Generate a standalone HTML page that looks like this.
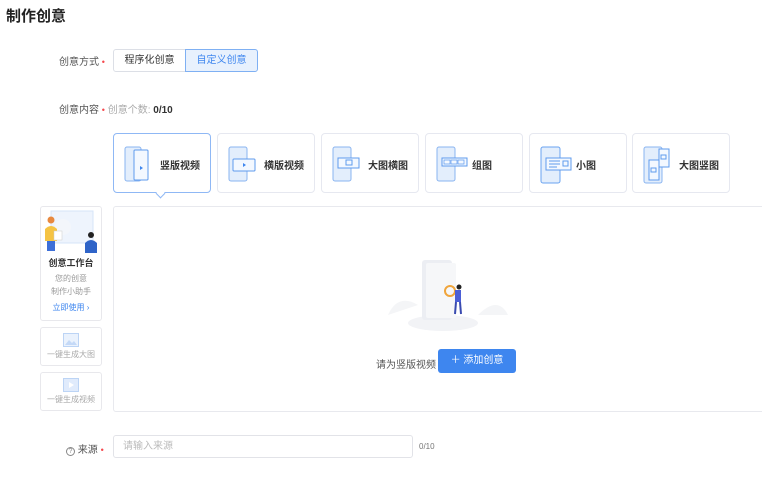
<!DOCTYPE html>
<html><head><meta charset="utf-8"><style>
*{margin:0;padding:0;box-sizing:border-box}
body{width:772px;height:484px;background:#fff;font-family:"Liberation Sans","Noto Sans CJK SC",sans-serif;color:#333;position:relative;overflow:hidden;font-size:10px}
.a{position:absolute}
.lbl{font-size:10px;color:#555}
.star{color:#f5484d;font-size:9px}
.card{position:absolute;top:133px;width:98px;height:60px;border:1px solid #e6e8f0;border-radius:4px;background:#fff}
.card.on{border-color:#8fb8f5}
.card .t{position:absolute;left:46px;top:23px;font-size:10px;font-weight:bold;color:#333}
.card svg{position:absolute;left:10px;top:12px}
.side{position:absolute;left:40px;width:62px;border:1px solid #e8e8ec;border-radius:3px;background:#fff;text-align:center}
</style></head><body>
<div class="a" style="left:6px;top:5px;font-size:15px;font-weight:bold;color:#222">制作创意</div>

<div class="a lbl" style="left:59px;top:53px">创意方式 <span class="star">•</span></div>
<div class="a" style="left:113px;top:49px;width:73px;height:23px;border:1px solid #dcdfe6;border-radius:3px 0 0 3px;font-size:10px;line-height:21px;text-align:center;color:#333">程序化创意</div>
<div class="a" style="left:185px;top:49px;width:73px;height:23px;border:1px solid #7fb0f3;background:#e8f1fd;border-radius:0 3px 3px 0;font-size:10px;line-height:21px;text-align:center;color:#3e86ef">自定义创意</div>

<div class="a lbl" style="left:59px;top:101px">创意内容 <span class="star">•</span> <span style="color:#aaa">创意个数:</span> <b style="color:#333">0/10</b></div>

<div class="card on" style="left:113px"><svg width="28" height="36"><rect x="1" y="1" width="16" height="34" rx="2" fill="#e3eefc" stroke="#8ab4f0"/><rect x="10" y="4" width="14" height="30" rx="1" fill="#f3f8ff" stroke="#5f9bee"/><path d="M16 20l3 2-3 2z" fill="#3e86ef"/></svg><span class="t">竖版视频</span></div>
<div class="a" style="left:157px;top:190px;width:7px;height:7px;background:#fff;border-right:1px solid #8fb8f5;border-bottom:1px solid #8fb8f5;transform:rotate(45deg)"></div>
<div class="card" style="left:217px"><svg width="30" height="36"><rect x="1" y="1" width="18" height="34" rx="2" fill="#e3eefc" stroke="#8ab4f0"/><rect x="5" y="13" width="22" height="12" rx="1" fill="#f3f8ff" stroke="#5f9bee"/><path d="M15 17l3 2-3 2z" fill="#3e86ef"/></svg><span class="t">横版视频</span></div>
<div class="card" style="left:321px"><svg width="30" height="36"><rect x="1" y="1" width="18" height="34" rx="2" fill="#e3eefc" stroke="#8ab4f0"/><rect x="6" y="12" width="21" height="10" fill="#f3f8ff" stroke="#5f9bee"/><rect x="14" y="14" width="6" height="5" fill="none" stroke="#5f9bee"/></svg><span class="t">大图横图</span></div>
<div class="card" style="left:425px"><svg width="34" height="36"><rect x="1" y="1" width="18" height="34" rx="2" fill="#e3eefc" stroke="#8ab4f0"/><rect x="6" y="12" width="25" height="8" fill="#f3f8ff" stroke="#5f9bee"/><path d="M8 14h6v4H8zM15 14h6v4h-6zM22 14h6v4h-6z" fill="none" stroke="#5f9bee" stroke-width=".7"/></svg><span class="t">组图</span></div>
<div class="card" style="left:529px"><svg width="34" height="38"><rect x="1" y="1" width="19" height="36" rx="2" fill="#e3eefc" stroke="#6aa3f0"/><rect x="6" y="12" width="25" height="12" fill="#f3f8ff" stroke="#5f9bee"/><path d="M9 15h11M9 18h11M9 21h8" stroke="#5f9bee"/><rect x="23" y="15" width="5" height="5" fill="none" stroke="#5f9bee"/></svg><span class="t">小图</span></div>
<div class="card" style="left:632px"><svg width="30" height="38"><rect x="1" y="1" width="18" height="36" rx="2" fill="#e3eefc" stroke="#8ab4f0"/><rect x="16" y="3" width="10" height="18" fill="#f3f8ff" stroke="#5f9bee"/><rect x="6" y="14" width="10" height="20" fill="#f3f8ff" stroke="#5f9bee"/><rect x="18" y="9" width="5" height="4" fill="none" stroke="#5f9bee"/><rect x="8" y="22" width="5" height="4" fill="none" stroke="#5f9bee"/></svg><span class="t">大图竖图</span></div>

<div class="side" style="top:206px;height:115px">
<svg width="60" height="46" style="display:block;margin:0 auto"><rect x="10" y="4" width="42" height="32" fill="#eef4fd" stroke="#d6e4f8"/><circle cx="22" cy="20" r="8" fill="#f3f6fb"/><circle cx="10" cy="13" r="3.5" fill="#e8893f"/><path d="M4 22q6-6 12 0v12H4z" fill="#f5c343"/><rect x="6" y="34" width="8" height="10" fill="#3d6fd8"/><rect x="13" y="24" width="8" height="9" fill="#fff" stroke="#ccc" stroke-width=".5"/><circle cx="50" cy="28" r="3" fill="#222"/><path d="M44 36q6-6 12 0v10H44z" fill="#2f64c8"/></svg>
<div style="font-size:9px;font-weight:bold;color:#333;margin-top:3px">创意工作台</div>
<div style="font-size:8px;color:#999;line-height:13px;margin-top:3px">您的创意<br>制作小助手</div>
<div style="font-size:8px;color:#3e86ef;margin-top:4px">立即使用 ›</div>
</div>
<div class="side" style="top:327px;height:39px"><svg width="16" height="14" style="display:block;margin:5px auto 2px"><rect x=".5" y=".5" width="15" height="13" fill="#eaf2fd" stroke="#bcd4f5"/><path d="M2 12l4-5 3 3 2-2 3 4z" fill="#c4d9f7"/></svg><div style="font-size:8px;color:#aaa">一键生成大图</div></div>
<div class="side" style="top:372px;height:39px"><svg width="16" height="14" style="display:block;margin:5px auto 2px"><rect x=".5" y=".5" width="15" height="13" fill="#e0ebfc" stroke="#bcd4f5"/><path d="M6 4l5 3-5 3z" fill="#fff"/></svg><div style="font-size:8px;color:#aaa">一键生成视频</div></div>

<div class="a" style="left:113px;top:206px;width:649px;height:206px;border:1px solid #e8e9ee;border-right:none;border-radius:3px 0 0 3px;background:#fff"></div>
<svg class="a" style="left:388px;top:255px" width="120" height="80"><ellipse cx="55" cy="68" rx="35" ry="8" fill="#f2f3f6"/><path d="M0 60q10-22 30-10z" fill="#f4f5f7"/><path d="M90 60q20-20 30 0z" fill="#f4f5f7"/><rect x="34" y="5" width="30" height="60" rx="3" fill="#eceef3"/><rect x="38" y="8" width="30" height="55" rx="2" fill="#f6f7f9"/><circle cx="62" cy="36" r="5" fill="none" stroke="#f0a53c" stroke-width="2"/><circle cx="71" cy="32" r="2.5" fill="#222"/><rect x="67" y="35" width="6" height="12" fill="#4b5fd6"/><path d="M68 47l-1 12M72 47l1 12" stroke="#3a4bb0" stroke-width="2"/></svg>
<div class="a" style="left:376px;top:356px;font-size:10px;color:#555">请为竖版视频</div>
<div class="a" style="left:438px;top:349px;width:78px;height:24px;background:#3e86ef;border-radius:3px;color:#fff;font-size:10px;line-height:24px;text-align:center">＋ 添加创意</div>

<div class="a lbl" style="left:66px;top:441px"><span style="display:inline-block;width:9px;height:9px;border:1px solid #888;border-radius:50%;font-size:7px;line-height:8px;text-align:center;color:#888">?</span> 来源 <span class="star">•</span></div>
<div class="a" style="left:113px;top:435px;width:300px;height:23px;border:1px solid #e2e3e8;border-radius:3px;font-size:10px;color:#bbb;line-height:21px;padding-left:9px">请输入来源</div>
<div class="a" style="left:419px;top:442px;font-size:8px;color:#777">0/10</div>
</body></html>
